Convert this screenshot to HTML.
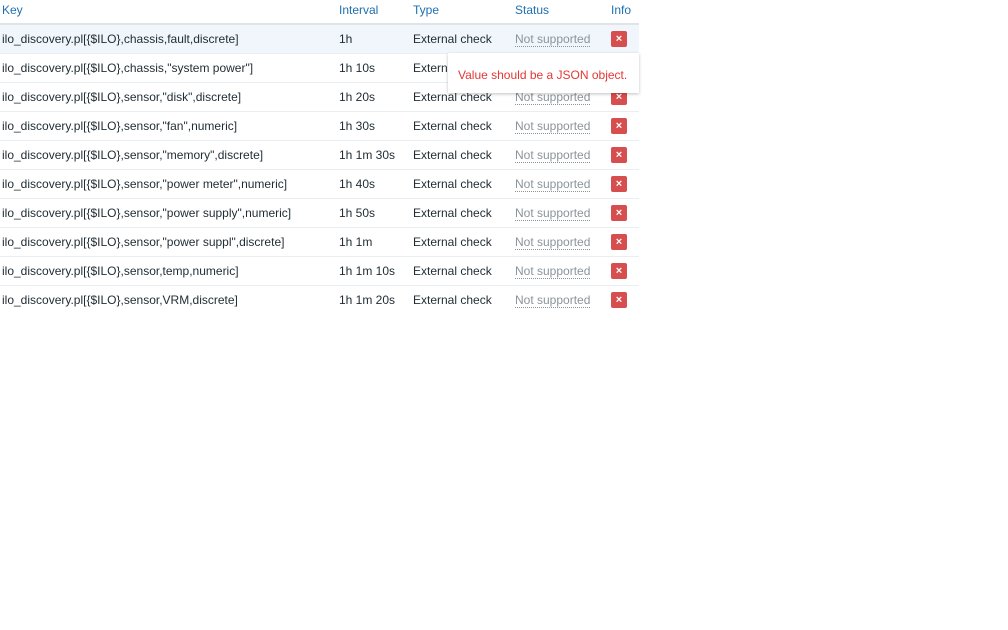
<!DOCTYPE html>
<html><head><meta charset="utf-8"><style>
body{margin:0;background:#fff;font-family:"Liberation Sans",Arial,sans-serif;font-size:12px;color:#1f2c33;width:1008px;height:630px;overflow:hidden;position:relative}
table{border-collapse:collapse;width:639px;position:absolute;left:0;top:0;table-layout:fixed}
th{color:#1f6fae;font-weight:normal;text-align:left;height:24px;padding:3px 0 0 2px;vertical-align:top;border-bottom:2px solid #dfe4e7;box-sizing:border-box}
td{height:28px;padding:0 0 0 2px;border-bottom:1px solid #ebeef0;vertical-align:middle;white-space:nowrap;overflow:hidden}
tr:last-child td{border-bottom:none}
tr.hl td{background:#f0f6fb}
.ns{color:#8a949b;border-bottom:1px dotted #8a949b}
.x{display:inline-flex;align-items:center;justify-content:center;width:16px;height:16px;background:#d64e4e;border-radius:2px;color:#fff;font-size:11px;font-weight:bold;vertical-align:middle;line-height:1}
.tip{position:absolute;left:448px;top:53px;width:191px;height:40px;background:#fff;box-shadow:0 1px 3px rgba(0,0,0,.25);color:#e33734;font-size:12px;line-height:44px;box-sizing:border-box;padding-left:10px}
</style></head><body>
<table>
<colgroup><col style="width:337px"><col style="width:74px"><col style="width:102px"><col style="width:96px"><col style="width:30px"></colgroup>
<tr><th>Key</th><th>Interval</th><th>Type</th><th>Status</th><th>Info</th></tr>
<tr class="hl"><td>ilo_discovery.pl[{$ILO},chassis,fault,discrete]</td><td>1h</td><td>External check</td><td><span class="ns">Not supported</span></td><td><span class="x">×</span></td></tr>
<tr><td>ilo_discovery.pl[{$ILO},chassis,"system power"]</td><td>1h 10s</td><td>External check</td><td><span class="ns">Not supported</span></td><td><span class="x">×</span></td></tr>
<tr><td>ilo_discovery.pl[{$ILO},sensor,"disk",discrete]</td><td>1h 20s</td><td>External check</td><td><span class="ns">Not supported</span></td><td><span class="x">×</span></td></tr>
<tr><td>ilo_discovery.pl[{$ILO},sensor,"fan",numeric]</td><td>1h 30s</td><td>External check</td><td><span class="ns">Not supported</span></td><td><span class="x">×</span></td></tr>
<tr><td>ilo_discovery.pl[{$ILO},sensor,"memory",discrete]</td><td>1h 1m 30s</td><td>External check</td><td><span class="ns">Not supported</span></td><td><span class="x">×</span></td></tr>
<tr><td>ilo_discovery.pl[{$ILO},sensor,"power meter",numeric]</td><td>1h 40s</td><td>External check</td><td><span class="ns">Not supported</span></td><td><span class="x">×</span></td></tr>
<tr><td>ilo_discovery.pl[{$ILO},sensor,"power supply",numeric]</td><td>1h 50s</td><td>External check</td><td><span class="ns">Not supported</span></td><td><span class="x">×</span></td></tr>
<tr><td>ilo_discovery.pl[{$ILO},sensor,"power suppl",discrete]</td><td>1h 1m</td><td>External check</td><td><span class="ns">Not supported</span></td><td><span class="x">×</span></td></tr>
<tr><td>ilo_discovery.pl[{$ILO},sensor,temp,numeric]</td><td>1h 1m 10s</td><td>External check</td><td><span class="ns">Not supported</span></td><td><span class="x">×</span></td></tr>
<tr><td>ilo_discovery.pl[{$ILO},sensor,VRM,discrete]</td><td>1h 1m 20s</td><td>External check</td><td><span class="ns">Not supported</span></td><td><span class="x">×</span></td></tr>
</table>
<div class="tip">Value should be a JSON object.</div>
</body></html>
